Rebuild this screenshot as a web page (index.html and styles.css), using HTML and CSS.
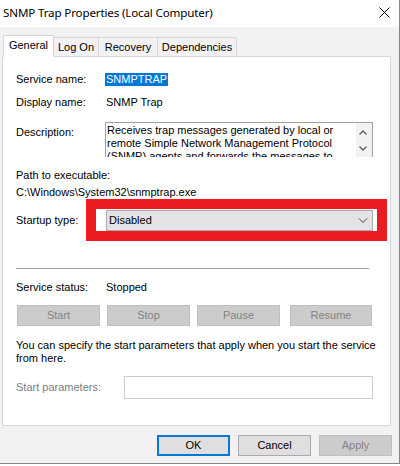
FILE: index.html
```html
<!DOCTYPE html>
<html>
<head>
<meta charset="utf-8">
<title>SNMP Trap Properties</title>
<link rel="stylesheet" href="styles.css">
</head>
<body>
<div class="window">
  <div class="titlebar">
    <span class="title">SNMP Trap Properties (Local Computer)</span>
    <span class="close"><svg width="11" height="11" viewBox="0 0 11 11"><path d="M0.5 0.5L10.5 10.5M10.5 0.5L0.5 10.5" stroke="#000" stroke-width="1" fill="none"/></svg></span>
  </div>
  <div class="client">
    <div class="tabs">
      <div class="tab active t-general">General</div>
      <div class="tab t-logon">Log On</div>
      <div class="tab t-recovery">Recovery</div>
      <div class="tab t-deps">Dependencies</div>
    </div>
    <div class="panel">
      <div class="row r-name"><span class="label">Service name:</span><span class="sel">SNMPTRAP</span></div>
      <div class="row r-display"><span class="label">Display name:</span><span>SNMP Trap</span></div>
      <div class="row r-desc">
        <span class="label desc-label">Description:</span>
        <div class="descbox">
          <div class="desctext">Receives trap messages generated by local or<br>remote Simple Network Management Protocol<br>(SNMP) agents and forwards the messages to<br>trap monitoring programs running on this</div>
          <div class="scrollbar"><svg width="16" height="34" viewBox="0 0 16 34"><path d="M3.5 11.5L7 8L10.5 11.5M3.5 23.5L7 27L10.5 23.5" stroke="#606060" stroke-width="1.4" fill="none"/></svg></div>
        </div>
      </div>
      <div class="path-label">Path to executable:</div>
      <div class="path">C:\Windows\System32\snmptrap.exe</div>
      <div class="row r-startup">
        <span class="label">Startup type:</span>
        <div class="combo">
          <span>Disabled</span>
          <svg class="chev" width="10" height="6" viewBox="0 0 10 6"><path d="M1 0.5L5 4.5L9 0.5" stroke="#404040" stroke-width="1" fill="none"/></svg>
          <div class="redframe"></div>
        </div>
      </div>
      <div class="sep"></div>
      <div class="row r-status"><span class="label">Service status:</span><span>Stopped</span></div>
      <div class="svc-buttons">
        <div class="btn disabled b-start">Start</div>
        <div class="btn disabled b-stop">Stop</div>
        <div class="btn disabled b-pause">Pause</div>
        <div class="btn disabled b-resume">Resume</div>
      </div>
      <p class="note">You can specify the start parameters that apply when you start the service<br>from here.</p>
      <div class="row r-params"><span class="label dim">Start parameters:</span><div class="input"></div></div>
    </div>
    <div class="footer">
      <div class="btn fbtn default">OK</div>
      <div class="btn fbtn">Cancel</div>
      <div class="btn fbtn disabled">Apply</div>
    </div>
  </div>
</div>
</body>
</html>
```
FILE: styles.css
```css
* { box-sizing: border-box; }
html, body { margin: 0; padding: 0; background: #fff; }
body {
  width: 400px;
  height: 466px;
  overflow: hidden;
  font-family: "Liberation Sans", Arial, sans-serif;
  font-size: 11px;
  line-height: 13px;
  color: #000;
}
.window {
  width: 400px;
  height: 464px;
  border-right: 1px solid #868686;
  border-bottom: 1px solid #868686;
  background: #f4f1f4;
}
.titlebar {
  height: 27px;
  background: #fff;
  display: flex;
  justify-content: space-between;
  align-items: flex-start;
}
.title {
  font-family: "Noto Sans", sans-serif;
  font-size: 11.6px;
  letter-spacing: -0.15px;
  line-height: 16px;
  padding: 5px 0 0 3px;
}
.close { margin: 7px 9px 0 0; display: flex; }
.client { padding: 8px 0 0 2px; }
.tabs {
  display: flex;
  align-items: flex-end;
  height: 21px;
  padding-left: 1px;
}
.tab {
  height: 19px;
  border: 1px solid #d9d6d9;
  border-bottom: none;
  background: #f4f1f4;
  text-align: center;
  padding-top: 1px;
  line-height: 17px;
  margin-left: -1px;
  white-space: nowrap;
}
.tab.active {
  height: 22px;
  background: #fff;
  position: relative;
  z-index: 1;
  margin-bottom: -1px;
  margin-left: 0;
}
.t-general { width: 51px; }
.t-logon { width: 46px; }
.t-recovery { width: 60px; }
.t-deps { width: 80px; }
.panel {
  width: 389px;
  height: 370px;
  background: #fff;
  border: 1px solid #d9d6d9;
  padding: 16px 0 0 13px;
}
.row { display: flex; align-items: center; }
.label { width: 90px; flex: none; white-space: nowrap; }
.sel {
  background: #0078d7;
  color: #fff;
  margin-left: -1px;
  padding: 0 1px;
}
.r-display { margin-top: 10px; }
.r-desc { margin-top: 13px; align-items: flex-start; }
.desc-label { margin-top: 4px; }
.descbox {
  margin-left: -1px;
  width: 268px;
  height: 35px;
  border: 1px solid #a3a0a3;
  border-bottom: none;
  display: flex;
  overflow: hidden;
}
.desctext {
  flex: 1;
  padding: 1px 0 0 1px;
  white-space: nowrap;
  overflow: hidden;
}
.scrollbar { width: 16px; flex: none; background: #f4f1f4; display: flex; }
.path-label { margin-top: 12px; }
.path { margin-top: 4px; }
.r-startup { margin-top: 11px; }
.combo {
  position: relative;
  width: 267px;
  height: 21px;
  border: 1px solid #adaaad;
  background: #e5e2e5;
  display: flex;
  align-items: center;
  justify-content: space-between;
  padding: 0 4px 0 2px;
}
.chev { display: block; margin-top: 1px; }
.redframe {
  position: absolute;
  left: -21px;
  right: -15px;
  top: -12px;
  bottom: -11px;
  border: 10px solid #ed1c24;
}
.sep {
  margin-top: 37px;
  width: 353px;
  height: 1px;
  background: #a0a0a0;
}
.r-status { margin-top: 12px; }
.svc-buttons { display: flex; margin-top: 11px; }
.btn {
  height: 21px;
  border: 1px solid #adaaad;
  background: #e1dee1;
  display: flex;
  align-items: center;
  justify-content: center;
}
.btn.disabled {
  background: #cccccc;
  border-color: #bfbfbf;
  color: #838383;
}
.b-start { width: 83px; margin-left: 1px; }
.b-stop { width: 83px; margin-left: 7px; }
.b-pause { width: 83px; margin-left: 7px; }
.b-resume { width: 82px; margin-left: 10px; }
.note {
  margin: 13px 0 0 0;
  line-height: 12.5px;
  white-space: nowrap;
}
.r-params { margin-top: 12px; }
.dim { color: #7d7d7d; }
.input {
  margin-left: 18px;
  width: 249px;
  height: 23px;
  border: 1px solid #d0cdd0;
  background: #fff;
}
.footer {
  width: 390px;
  margin-top: 9px;
  display: flex;
  justify-content: flex-end;
  gap: 8px;
}
.fbtn { width: 73px; }
.fbtn.default { border: 2px solid #0078d7; }
```
